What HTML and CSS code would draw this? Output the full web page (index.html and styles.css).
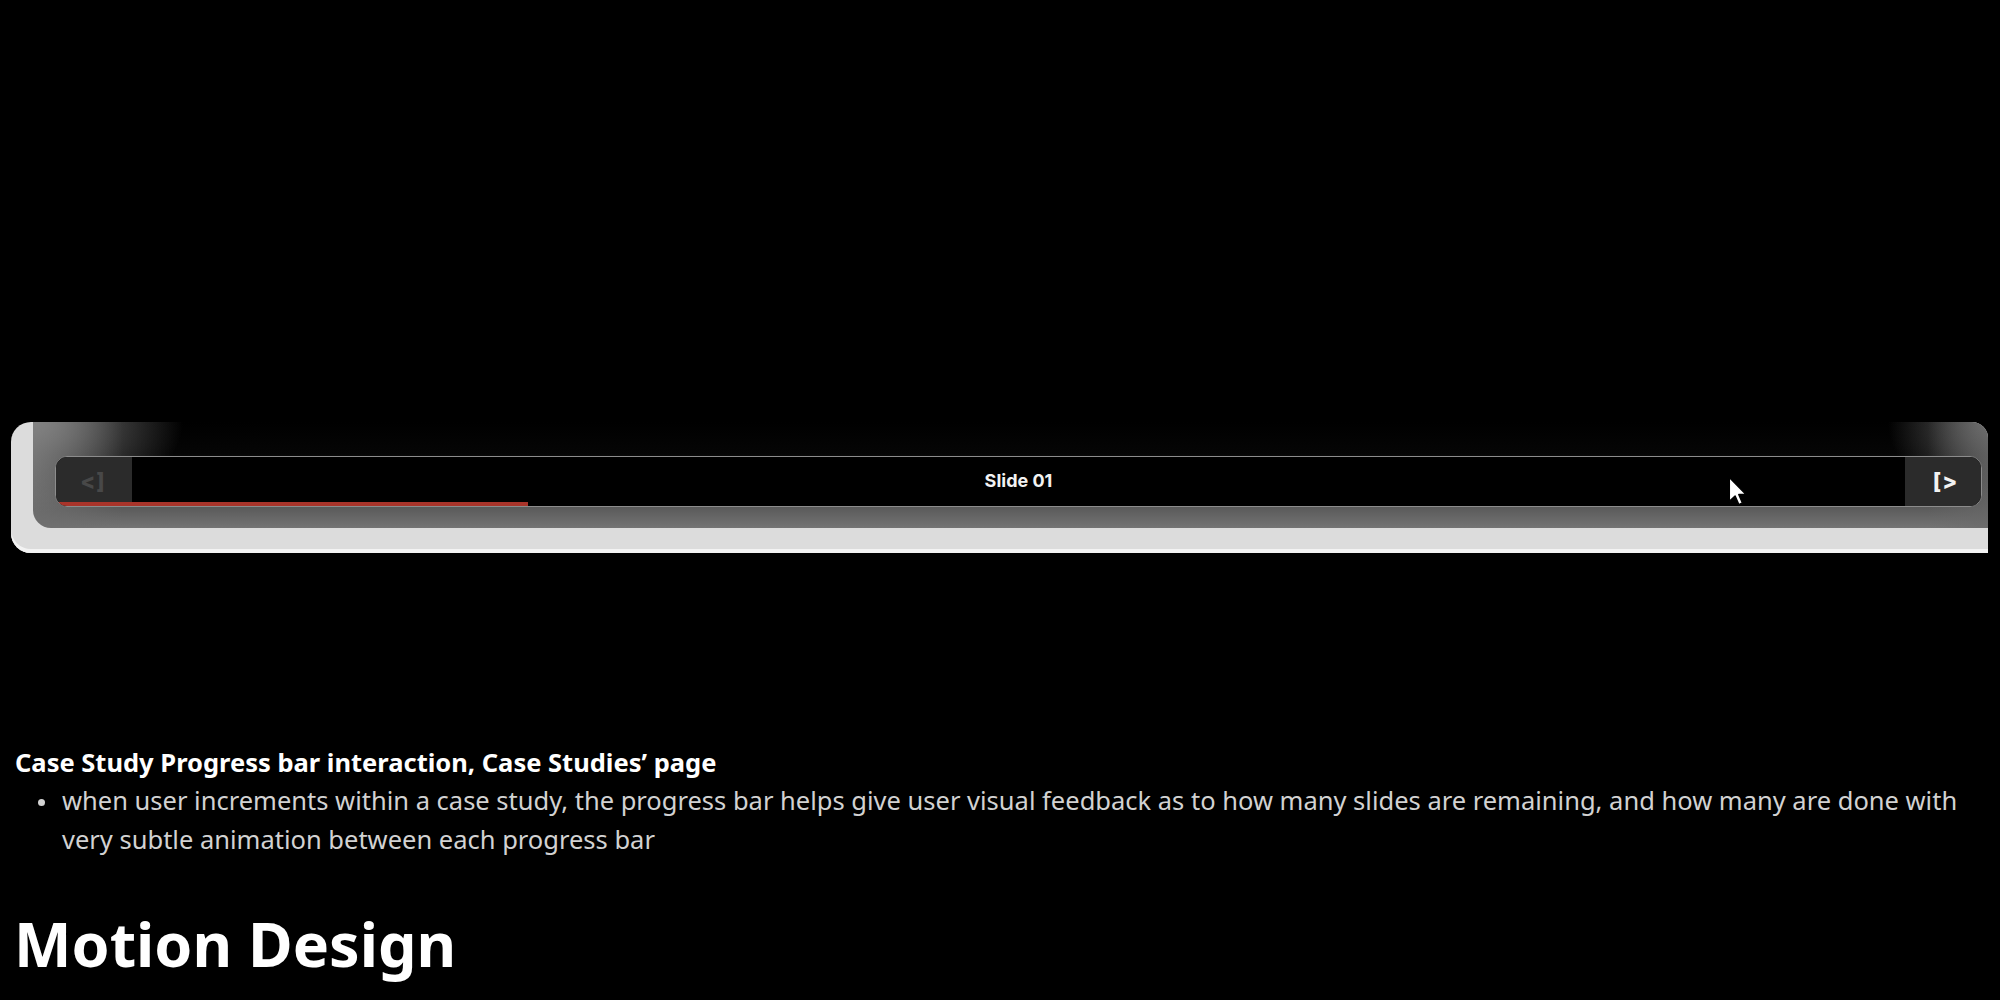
FILE: index.html
```html
<!DOCTYPE html>
<html lang="en">
<head>
<meta charset="utf-8">
<title>Motion Design</title>
<link rel="stylesheet" href="styles.css">
</head>
<body>
<main class="page">
  <section class="device">
    <div class="screen">
      <div class="bar">
        <button class="nav nav-prev" type="button">&lt;]</button>
        <div class="slide-label">Slide 01</div>
        <button class="nav nav-next" type="button">[&gt;</button>
        <span class="progress" style="width:472px"></span>
      </div>
      <svg class="cursor" viewBox="0 0 14 22" width="19" height="30" aria-hidden="true">
        <path d="M1 1 L1 18.5 L5.2 14.6 L8 21 L10.6 19.8 L7.9 13.6 L13.3 13.6 Z" fill="#fff" stroke="#000" stroke-width="1" stroke-linejoin="round"/>
      </svg>
    </div>
  </section>

  <section class="notes">
    <h3 class="notes-title">Case Study Progress bar interaction, Case Studies’ page</h3>
    <ul class="notes-list">
      <li>when user increments within a case study, the progress bar helps give user visual feedback as to how many slides are remaining, and how many are done with very subtle animation between each progress bar</li>
    </ul>
  </section>

  <h1 class="section-heading">Motion Design</h1>
</main>
</body>
</html>
```

FILE: styles.css
```css
* { box-sizing: border-box; }

html, body {
  margin: 0;
  padding: 0;
  background: #000;
}

body {
  width: 2000px;
  height: 1000px;
  overflow: hidden;
  font-family: "Noto Sans", "Open Sans", sans-serif;
  color: #fff;
}

.page {
  padding: 422px 12px 0 11px;
}

/* ---------- device frame ---------- */
.device {
  width: 1977px;
  height: 131px;
  background: #dcdcdc;
  border-radius: 20px 16px 0 20px;
  padding: 0 0 25px 22px;
  box-shadow: inset 0 -4px 0 #f3f3f3, inset 0 -1px 0 #bbb;
}

.screen {
  position: relative;
  height: 106px;
  border-radius: 0 16px 0 18px;
  padding: 34px 6px 0 22px;
  background:
    radial-gradient(ellipse 150px 90px at 0 0, rgba(130,130,130,1), rgba(0,0,0,0)),
    radial-gradient(ellipse 100px 80px at 100% 0, rgba(115,115,115,.85), rgba(0,0,0,0)),
    linear-gradient(to right, rgba(110,110,110,.9), rgba(0,0,0,0) 90px),
    linear-gradient(to left, rgba(105,105,105,.7), rgba(0,0,0,0) 60px),
    linear-gradient(to bottom, #000 0, #050505 30%, #4c4c4c 70%, #747474 100%);
}

.bar {
  position: relative;
  display: flex;
  height: 51px;
  border: 1.5px solid #8c8c8c;
  border-radius: 12px;
  background: #000;
  overflow: hidden;
}

.nav {
  flex: 0 0 76px;
  border: 0;
  margin: 0;
  padding: 0 0 2px;
  background: #2b2b2b;
  font-family: Inter, "DejaVu Sans", sans-serif;
  font-weight: 800;
  font-size: 22px;
  letter-spacing: 1px;
  display: flex;
  align-items: center;
  justify-content: center;
}

.nav-prev { color: #484848; padding-right: 2px; }
.nav-next { color: #f2f2f2; padding-left: 5px; }

.slide-label {
  flex: 1;
  display: flex;
  align-items: center;
  justify-content: center;
  padding-bottom: 2px;
  font-family: Inter, "DejaVu Sans", sans-serif;
  font-weight: 700;
  font-size: 18px;
  color: #f2f2f2;
}

.progress {
  position: absolute;
  left: 0;
  bottom: 0;
  height: 4px;
  background: #a9342a;
}

.cursor {
  position: absolute;
  left: 1695px;
  top: 54px;
}

/* ---------- notes ---------- */
.notes {
  margin-top: 190px;
  padding-left: 4px;
}

.notes-title {
  margin: 0;
  font-size: 25.5px;
  line-height: 38px;
  font-weight: 700;
  color: #fff;
}

.notes-list {
  list-style: none;
  margin: 0;
  padding: 0 0 0 47px;
}

.notes-list li {
  position: relative;
  font-size: 25.5px;
  line-height: 39px;
  color: #d2d2d2;
}

.notes-list li::before {
  content: "";
  position: absolute;
  left: -24px;
  top: 18px;
  width: 7px;
  height: 7px;
  border-radius: 50%;
  background: #d2d2d2;
}

.section-heading {
  margin: 48px 0 0 3px;
  font-size: 61px;
  line-height: 74px;
  font-weight: 700;
  color: #fff;
}
```
